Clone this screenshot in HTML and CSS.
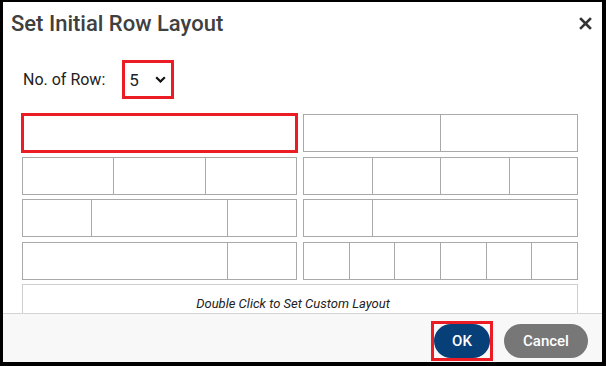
FILE: index.html
```html
<!DOCTYPE html>
<html lang="en">
<head>
    <meta charset="UTF-8">
    <title>Set Initial Row Layout</title>
    <link rel="stylesheet" href="styles.css">
</head>
<body>

    <div class="dialog">
        <div class="dialog-header">
            <h2>Set Initial Row Layout</h2>
            <button class="close-btn" title="Close">
                <svg width="13" height="13" viewBox="0 0 13 13">
                    <path d="M2 2 L11 11 M11 2 L2 11" stroke="#333" stroke-width="2.6" stroke-linecap="square"/>
                </svg>
            </button>
        </div>

        <div class="dialog-body">
            <div class="row-count">
                <label for="rowSelect">No. of Row:</label>
                <div class="select-box" id="rowSelect">
                    <span>5</span>
                    <svg width="11" height="7" viewBox="0 0 11 7">
                        <polyline points="1.2,1.2 5.5,5.5 9.8,1.2" fill="none" stroke="#111" stroke-width="2.2"/>
                    </svg>
                </div>
            </div>

            <div class="layout-grid">
                <!-- row 1 -->
                <div class="layout-row selected">
                    <div class="cell"></div>
                </div>
                <div class="layout-row">
                    <div class="cell"></div>
                    <div class="cell"></div>
                </div>

                <!-- row 2 -->
                <div class="layout-row">
                    <div class="cell"></div>
                    <div class="cell"></div>
                    <div class="cell"></div>
                </div>
                <div class="layout-row">
                    <div class="cell"></div>
                    <div class="cell"></div>
                    <div class="cell"></div>
                    <div class="cell"></div>
                </div>

                <!-- row 3 -->
                <div class="layout-row">
                    <div class="cell"></div>
                    <div class="cell wide"></div>
                    <div class="cell"></div>
                </div>
                <div class="layout-row">
                    <div class="cell"></div>
                    <div class="cell triple"></div>
                </div>

                <!-- row 4 -->
                <div class="layout-row">
                    <div class="cell triple"></div>
                    <div class="cell"></div>
                </div>
                <div class="layout-row">
                    <div class="cell"></div>
                    <div class="cell"></div>
                    <div class="cell"></div>
                    <div class="cell"></div>
                    <div class="cell"></div>
                    <div class="cell"></div>
                </div>

                <div class="custom-row">Double Click to Set Custom Layout</div>
            </div>
        </div>

        <div class="dialog-footer">
            <span class="focus-ring"><button class="btn btn-ok">OK</button></span>
            <button class="btn btn-cancel">Cancel</button>
        </div>
    </div>

</body>
</html>
```

FILE: styles.css
```css
body {
    margin: 0;
    background: #000;
    font-family: Roboto, "Liberation Sans", Arial, sans-serif;
    color: #333;
}
.dialog {
    margin: 2px 4px 4px 3px;
    width: 599px;
    height: 360px;
    background: #fff;
    display: flex;
    flex-direction: column;
    overflow: hidden;
}
.dialog-header {
    height: 42px;
    display: flex;
    align-items: center;
    justify-content: space-between;
    padding: 0 10px 0 8px;
}
.dialog-header h2 {
    margin: 0;
    font-size: 22px;
    font-weight: 500;
    color: #404040;
}
.close-btn {
    border: none;
    background: none;
    padding: 0;
    display: flex;
}
.dialog-body {
    flex: 1;
    overflow: hidden;
    padding: 16px 24px 0 19px;
}
.row-count {
    display: flex;
    align-items: center;
    gap: 17px;
    padding-left: 1px;
    font-size: 16px;
    color: #222;
}
.select-box {
    width: 37px;
    height: 33px;
    border: 3px solid #ec1c24;
    display: flex;
    align-items: center;
    justify-content: space-between;
    padding: 0 5px 0 4px;
    font-size: 17px;
    color: #222;
}
.layout-grid {
    display: grid;
    grid-template-columns: 275px 275px;
    column-gap: 6px;
    row-gap: 4.5px;
    margin-top: 15px;
}
.layout-row {
    display: flex;
    height: 38px;
    box-sizing: border-box;
    border: 1px solid #a9a9a9;
}
.layout-row.selected {
    outline: 3px solid #ec1c24;
    outline-offset: -2px;
}
.cell {
    flex: 1;
}
.cell + .cell {
    border-left: 1px solid #a9a9a9;
}
.cell.wide {
    flex: 2;
}
.cell.triple {
    flex: 3;
}
.custom-row {
    grid-column: 1 / 3;
    height: 38px;
    box-sizing: border-box;
    border: 1px solid #cfcfcf;
    display: flex;
    align-items: center;
    justify-content: center;
    padding-right: 14px;
    font-size: 13px;
    font-style: italic;
    color: #222;
}
.dialog-footer {
    height: 49px;
    border-top: 1px solid #d4d4d4;
    background: #f8f8f8;
    display: flex;
    justify-content: flex-end;
    align-items: flex-start;
    gap: 11px;
    padding: 7px 14px 0 0;
    box-sizing: border-box;
}
.focus-ring {
    display: flex;
    border: 3px solid #ec1c24;
}
.btn {
    height: 34px;
    border: none;
    border-radius: 17px;
    color: #fff;
    font-family: Roboto, "Liberation Sans", Arial, sans-serif;
    font-size: 15px;
    font-weight: 500;
}
.btn-ok {
    width: 56px;
    background: #073f78;
}
.btn-cancel {
    width: 84px;
    margin-top: 3px;
    background: #777;
}
```
